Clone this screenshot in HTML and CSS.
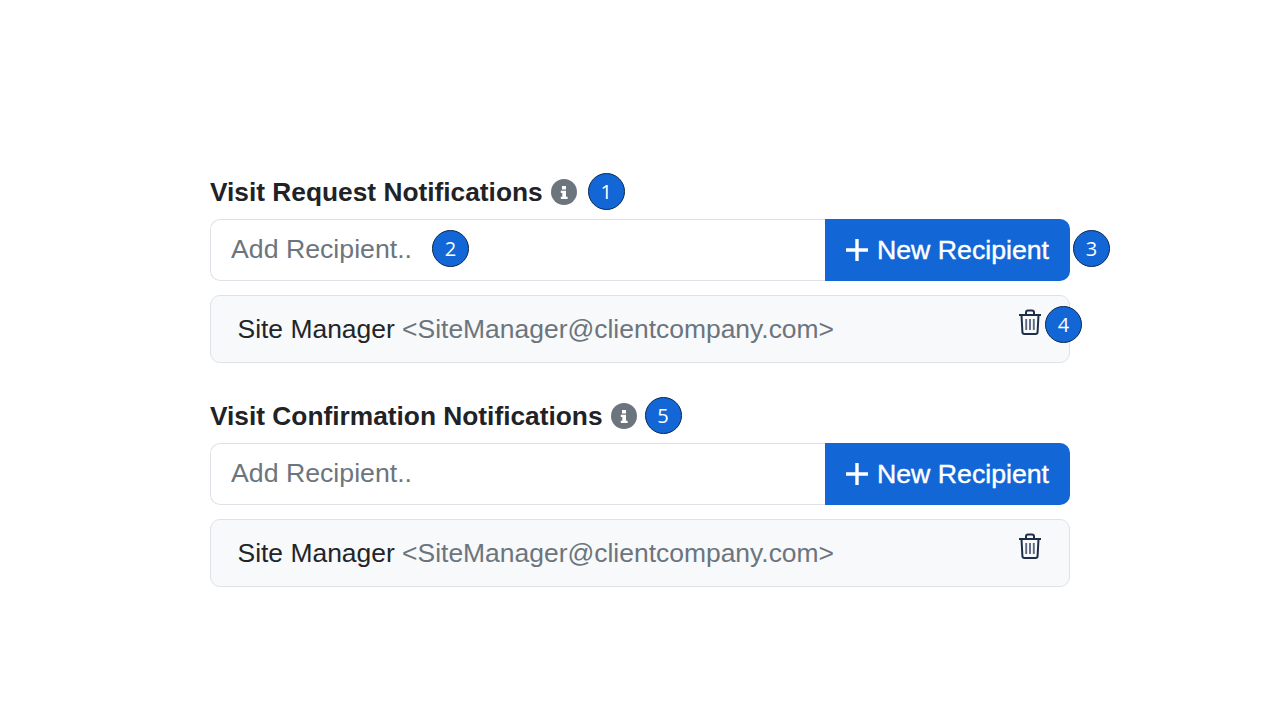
FILE: index.html
```html
<!DOCTYPE html>
<html lang="en">
<head>
    <meta charset="UTF-8">
    <title>Visit Notifications</title>
    <link rel="stylesheet" href="styles.css">
</head>
<body>
    <div class="container">
        <section class="section">
            <h2 class="heading">
                <span class="heading-text">Visit Request Notifications</span>
                <svg class="info" viewBox="0 0 26 26"><circle cx="13" cy="13" r="13" fill="#6c757d"/><path d="M11 7h4v3.4h-4zM9.800 11.800H15v6h1.600V20H9.800v-2.200h1.500v-3.800H9.800z" fill="#fff"/></svg>
                <span class="badge badge-heading">1</span>
            </h2>
            <div class="input-group">
                <input class="input" type="text" placeholder="Add Recipient..">
                <span class="badge badge-input">2</span>
                <button class="btn"><svg class="plus" viewBox="0 0 22 22"><path d="M11 0v22M0 11h22" stroke="#fff" stroke-width="3.4" fill="none"/></svg>New Recipient</button>
                <span class="badge badge-btn">3</span>
            </div>
            <div class="item">
                <span>Site Manager <span class="email">&lt;SiteManager@clientcompany.com&gt;</span></span>
                <svg class="trash" viewBox="0 0 24 26"><g fill="none" stroke="#1d2d4a" stroke-width="2"><path d="M1 6h22M8 5.500V3.500q0-2 2-2h4q2 0 2 2v2M3.500 6l.9 17q.1 2 2.100 2h11q2 0 2.100-2l.9-17"/><path d="M8.200 10v11M12 10v11M15.800 10v11" stroke="#5d6980" stroke-width="1.900"/></g></svg>
                <span class="badge badge-trash">4</span>
            </div>
        </section>

        <section class="section">
            <h2 class="heading">
                <span class="heading-text">Visit Confirmation Notifications</span>
                <svg class="info" viewBox="0 0 26 26"><circle cx="13" cy="13" r="13" fill="#6c757d"/><path d="M11 7h4v3.4h-4zM9.800 11.800H15v6h1.600V20H9.800v-2.200h1.500v-3.800H9.800z" fill="#fff"/></svg>
                <span class="badge badge-heading-tight">5</span>
            </h2>
            <div class="input-group">
                <input class="input" type="text" placeholder="Add Recipient..">
                <button class="btn"><svg class="plus" viewBox="0 0 22 22"><path d="M11 0v22M0 11h22" stroke="#fff" stroke-width="3.4" fill="none"/></svg>New Recipient</button>
            </div>
            <div class="item">
                <span>Site Manager <span class="email">&lt;SiteManager@clientcompany.com&gt;</span></span>
                <svg class="trash" viewBox="0 0 24 26"><g fill="none" stroke="#1d2d4a" stroke-width="2"><path d="M1 6h22M8 5.500V3.500q0-2 2-2h4q2 0 2 2v2M3.500 6l.9 17q.1 2 2.100 2h11q2 0 2.100-2l.9-17"/><path d="M8.200 10v11M12 10v11M15.800 10v11" stroke="#5d6980" stroke-width="1.900"/></g></svg>
            </div>
        </section>
    </div>
</body>
</html>
```

FILE: styles.css
```css
body {
    background-color: #fff;
    color: #212529;
    font-family: 'Liberation Sans', Arial, sans-serif;
    margin: 0;
    padding: 0;
}
.container {
    width: 860px;
    margin-left: 210px;
    padding-top: 173px;
    display: flex;
    flex-direction: column;
    gap: 34px;
}
.section {
    display: flex;
    flex-direction: column;
}
.heading {
    display: flex;
    align-items: center;
    height: 37px;
    margin: 0 0 9px;
    font-size: 26.3px;
    font-weight: bold;
    color: #1f2327;
}
.heading-text {
    padding-top: 1px;
}
.info {
    width: 26px;
    height: 26px;
    margin-left: 8px;
}
.badge {
    width: 37px;
    height: 37px;
    box-sizing: border-box;
    border: 1px solid #0b2a52;
    border-radius: 50%;
    background-color: #1266d6;
    color: #fff;
    font-family: 'Open Sans', sans-serif;
    font-size: 20px;
    font-weight: normal;
    display: flex;
    align-items: center;
    justify-content: center;
}
.badge-heading {
    margin-left: 11px;
}
.badge-heading-tight {
    margin-left: 8px;
}
.input-group {
    position: relative;
    display: flex;
    height: 62px;
    margin-bottom: 14px;
}
.input {
    flex: 1;
    min-width: 0;
    box-sizing: border-box;
    padding: 0 20px 1px;
    border: 1px solid #dee2e6;
    border-right: none;
    border-radius: 10px 0 0 10px;
    background: #fff;
    font-family: inherit;
    font-size: 26.7px;
    outline: none;
}
.input::placeholder {
    color: #6c757d;
    opacity: 1;
}
.btn {
    width: 245px;
    display: flex;
    align-items: center;
    justify-content: center;
    gap: 9px;
    border: none;
    border-radius: 0 10px 10px 0;
    background-color: #1266d6;
    color: #fff;
    font-family: inherit;
    font-size: 26.7px;
    -webkit-text-stroke: 0.4px #fff;
    padding: 0;
}
.plus {
    width: 22px;
    height: 22px;
}
.badge-input {
    position: absolute;
    left: 222px;
    top: 11px;
}
.badge-btn {
    position: absolute;
    right: -40px;
    top: 11px;
}
.item {
    position: relative;
    display: flex;
    align-items: center;
    justify-content: space-between;
    box-sizing: border-box;
    height: 68px;
    padding: 0 27px 0 26.5px;
    border: 1px solid #dee2e6;
    border-radius: 10px;
    background-color: #f8f9fa;
    font-size: 26.45px;
}
.email {
    color: #6c757d;
}
.trash {
    width: 24px;
    height: 26px;
    margin-top: -15px;
}
.badge-trash {
    position: absolute;
    right: -13px;
    top: 10px;
}
```
